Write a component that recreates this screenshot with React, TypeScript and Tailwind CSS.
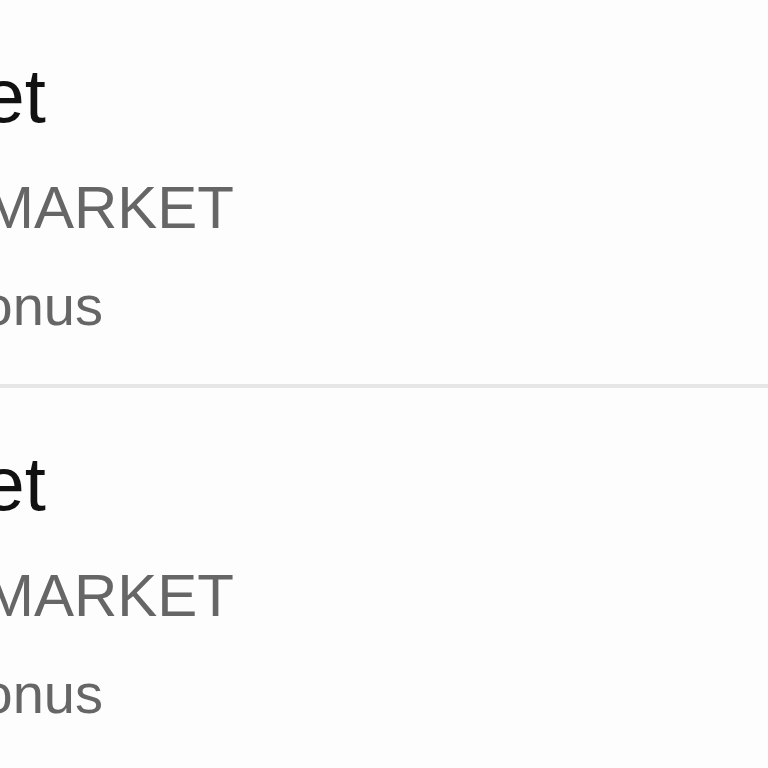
import React from "react";

interface Row {
  id: number;
  title: string;
  subtitle: string;
  caption: string;
}

const rows: Row[] = [
  { id: 1, title: "Market", subtitle: "SUPERMARKET", caption: "Bonus" },
  { id: 2, title: "Market", subtitle: "SUPERMARKET", caption: "Bonus" },
];

// Each line is right-anchored so the start of the word runs off the left edge,
// as in the cropped list view.
const ListRow: React.FC<{ row: Row }> = ({ row }) => (
  <div className="flex flex-col pt-[58px] pb-[50px] border-b-4 border-[#e6e6e6]">
    <div className="flex justify-end w-[46px] h-[76px] whitespace-nowrap text-[76px] leading-none text-[#111111]">
      <span>{row.title}</span>
    </div>
    <div className="flex justify-end w-[234px] h-[60px] mt-[44px] whitespace-nowrap text-[60px] leading-none text-[#666666]">
      <span>{row.subtitle}</span>
    </div>
    <div className="flex justify-end w-[103px] h-[56px] mt-[40px] whitespace-nowrap text-[56px] leading-none text-[#666666]">
      <span>{row.caption}</span>
    </div>
  </div>
);

export default function App() {
  return (
    <div
      className="w-full h-screen overflow-hidden bg-[#fdfdfd]"
      style={{ fontFamily: '"Liberation Sans", Arial, sans-serif' }}
    >
      {rows.map((row) => (
        <ListRow key={row.id} row={row} />
      ))}
    </div>
  );
}
